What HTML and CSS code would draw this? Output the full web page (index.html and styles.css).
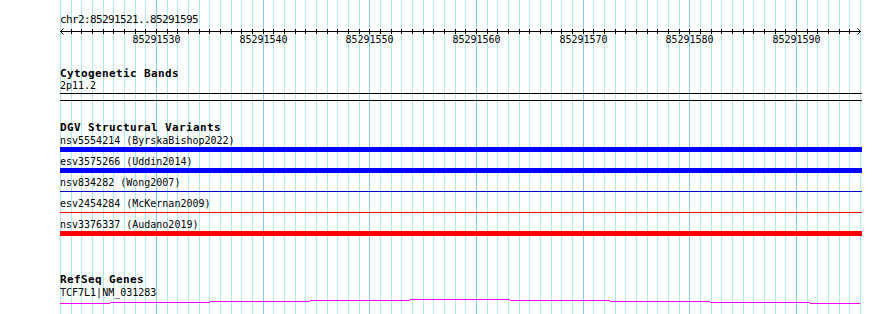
FILE: index.html
```html
<!DOCTYPE html>
<html lang="en">
<head>
    <meta charset="UTF-8">
    <meta name="viewport" content="width=device-width, initial-scale=1.0">
    <title>chr2:85291521..85291595</title>
    <link rel="stylesheet" href="styles.css">
</head>
<body>
    <div class="browser">
        <svg class="grid" id="grid" width="890" height="314"></svg>
        <div class="panel">
            <div class="ruler">
                <div class="ruler-title">chr2:85291521..85291595</div>
                <svg class="ruler-scale" id="ruler" width="890" height="24"></svg>
            </div>

            <div class="track cyto">
                <div class="track-title">Cytogenetic Bands</div>
                <div class="label">2p11.2</div>
                <div class="band"></div>
            </div>

            <div class="track dgv">
                <div class="track-title">DGV Structural Variants</div>
                <div class="variant">
                    <div class="label">nsv5554214 (ByrskaBishop2022)</div>
                    <div class="slot"><div class="bar thick blue"></div></div>
                </div>
                <div class="variant">
                    <div class="label">esv3575266 (Uddin2014)</div>
                    <div class="slot"><div class="bar thick blue"></div></div>
                </div>
                <div class="variant">
                    <div class="label">nsv834282 (Wong2007)</div>
                    <div class="slot"><div class="bar thin navy"></div></div>
                </div>
                <div class="variant">
                    <div class="label">esv2454284 (McKernan2009)</div>
                    <div class="slot"><div class="bar thin red"></div></div>
                </div>
                <div class="variant">
                    <div class="label">nsv3376337 (Audano2019)</div>
                    <div class="slot"><div class="bar thick red"></div></div>
                </div>
            </div>

            <div class="track refseq">
                <div class="track-title">RefSeq Genes</div>
                <div class="label">TCF7L1|NM_031283</div>
                <svg class="gene" width="800" height="8" shape-rendering="crispEdges">
                    <rect x="0" y="5" width="50" height="1"/>
                    <rect x="50" y="4" width="100" height="1"/>
                    <rect x="150" y="3" width="100" height="1"/>
                    <rect x="250" y="2" width="100" height="1"/>
                    <rect x="350" y="1" width="100" height="1"/>
                    <rect x="450" y="2" width="100" height="1"/>
                    <rect x="550" y="3" width="100" height="1"/>
                    <rect x="650" y="4" width="100" height="1"/>
                    <rect x="750" y="5" width="50" height="1"/>
                </svg>
            </div>
        </div>
    </div>
    <script src="script.js"></script>
</body>
</html>
```

FILE: styles.css
```css
body {
    margin: 0;
    background: #ffffff;
    font-family: "DejaVu Sans Mono", monospace;
    color: #000;
}

.browser {
    position: relative;
    width: 890px;
    height: 314px;
    overflow: hidden;
}

.grid {
    position: absolute;
    top: 0;
    left: 0;
}

.grid-minor {
    stroke: #ade9ee;
    stroke-width: 1;
}

.grid-major {
    stroke: #88c9ea;
    stroke-width: 1;
}

.panel {
    position: relative;
}

.ruler {
    padding-top: 14px;
}

.ruler-title {
    padding-left: 60px;
    font-size: 11px;
    line-height: 12px;
    letter-spacing: -0.62px;
}

.ruler-scale {
    display: block;
    margin-top: 1px;
}

.axis {
    stroke: #000;
    stroke-width: 1;
}

.ruler-label {
    font-family: "DejaVu Sans Mono", monospace;
    font-size: 10px;
    fill: #000;
}

.track {
    padding-left: 60px;
}

.track-title {
    font-size: 11px;
    font-weight: bold;
    line-height: 12px;
    letter-spacing: 0.38px;
}

.label {
    font-size: 10px;
    line-height: 11px;
    white-space: nowrap;
}

.cyto {
    margin-top: 17px;
}

.band {
    width: 802px;
    height: 6px;
    margin-top: 2px;
    border-top: 1px solid #000;
    border-bottom: 1px solid #000;
}

.dgv {
    margin-top: 21px;
}

.dgv .track-title {
    margin-bottom: 1px;
}

.slot {
    display: flow-root;
    height: 10px;
}

.bar {
    width: 802px;
}

.bar.thick {
    height: 5px;
    margin-top: 1px;
}

.bar.thin {
    height: 1px;
    margin-top: 3px;
}

.blue {
    background: #0000ff;
}

.navy {
    background: #0000c8;
}

.red {
    background: #ff0000;
}

.refseq {
    margin-top: 34px;
}

.refseq .track-title {
    margin-bottom: 1px;
}

.gene {
    display: block;
    fill: #ff00ff;
}
```

FILE: script.js
```js
const START = 85291521;
const BASES = 75;
const LEFT = 60;
const SPAN = 800;
const NS = 'http://www.w3.org/2000/svg';

const xAt = (k) => Math.round(LEFT + k * SPAN / BASES) + 0.5;

const add = (svg, tag, attrs) => {
    const el = document.createElementNS(NS, tag);
    for (const key in attrs) {
        el.setAttribute(key, attrs[key]);
    }
    svg.appendChild(el);
    return el;
};

// background grid, one line per base
const grid = document.getElementById('grid');
for (let k = 0; k <= BASES; k++) {
    const x = xAt(k);
    const major = (START + k) % 10 === 0;
    add(grid, 'line', { x1: x, y1: 0, x2: x, y2: 314, class: major ? 'grid-major' : 'grid-minor' });
}

// ruler: axis, ticks, arrows and labels
const ruler = document.getElementById('ruler');
const axisY = 4.5;
add(ruler, 'line', { x1: LEFT, y1: axisY, x2: LEFT + SPAN + 1, y2: axisY, class: 'axis' });

for (let k = 1; k < BASES; k++) {
    const x = xAt(k);
    add(ruler, 'line', { x1: x, y1: axisY - 2.5, x2: x, y2: axisY + 2.5, class: 'axis' });
    if ((START + k) % 10 === 0) {
        const label = add(ruler, 'text', { x: x, y: 16, 'text-anchor': 'middle', class: 'ruler-label' });
        label.textContent = START + k;
    }
}

const l = LEFT + 0.5;
const r = LEFT + SPAN + 0.5;
add(ruler, 'polyline', { points: `${l + 3},${axisY - 3} ${l},${axisY} ${l + 3},${axisY + 3}`, fill: 'none', class: 'axis' });
add(ruler, 'polyline', { points: `${r - 3},${axisY - 3} ${r},${axisY} ${r - 3},${axisY + 3}`, fill: 'none', class: 'axis' });
```
